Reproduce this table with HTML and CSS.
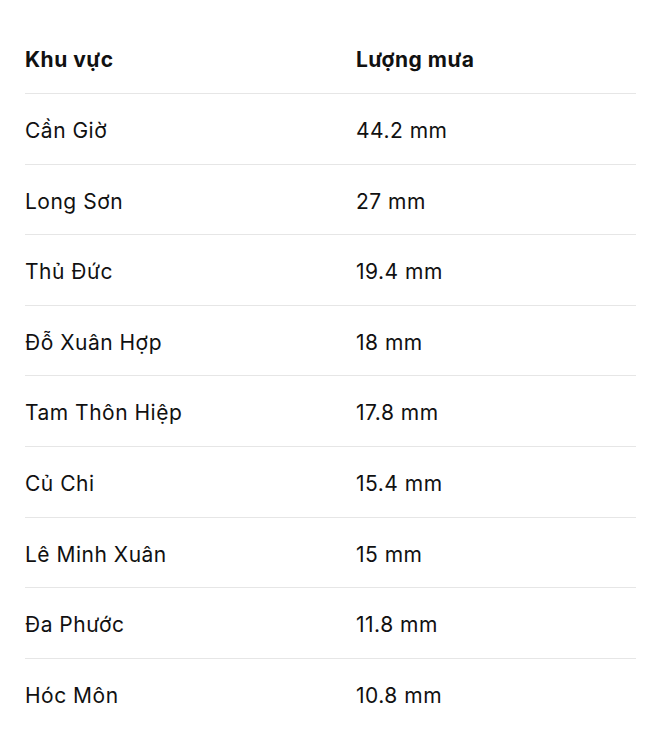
FILE: index.html
```html
<!DOCTYPE html>
<html lang="vi">
<head>
<meta charset="utf-8">
<link rel="stylesheet" href="styles.css">
</head>
<body>
<div class="table">
  <div class="row head"><div class="cell">Khu vực</div><div class="cell">Lượng mưa</div></div>
  <div class="row"><div class="cell">Cần Giờ</div><div class="cell">44.2 mm</div></div>
  <div class="row"><div class="cell">Long Sơn</div><div class="cell">27 mm</div></div>
  <div class="row"><div class="cell">Thủ Đức</div><div class="cell">19.4 mm</div></div>
  <div class="row"><div class="cell">Đỗ Xuân Hợp</div><div class="cell">18 mm</div></div>
  <div class="row"><div class="cell">Tam Thôn Hiệp</div><div class="cell">17.8 mm</div></div>
  <div class="row"><div class="cell">Củ Chi</div><div class="cell">15.4 mm</div></div>
  <div class="row"><div class="cell">Lê Minh Xuân</div><div class="cell">15 mm</div></div>
  <div class="row"><div class="cell">Đa Phước</div><div class="cell">11.8 mm</div></div>
  <div class="row last"><div class="cell">Hóc Môn</div><div class="cell">10.8 mm</div></div>
</div>
</body>
</html>
```
FILE: styles.css
```css
html, body {
  margin: 0;
  padding: 0;
  background: #ffffff;
}
body {
  font-family: Inter, "Liberation Sans", sans-serif;
  font-size: 21px;
  letter-spacing: 0.5px;
  color: #111111;
}
.table {
  width: 611px;
  margin-left: 25px;
}
.row {
  display: grid;
  grid-template-columns: 331px 1fr;
  box-sizing: border-box;
  height: 70.6px;
  padding-top: 24px;
  line-height: 25px;
  border-bottom: 1px solid #e6e6e6;
}
.row.head {
  height: 94px;
  padding-top: 47px;
  font-weight: 700;
}
.row.last {
  border-bottom: none;
}
```
